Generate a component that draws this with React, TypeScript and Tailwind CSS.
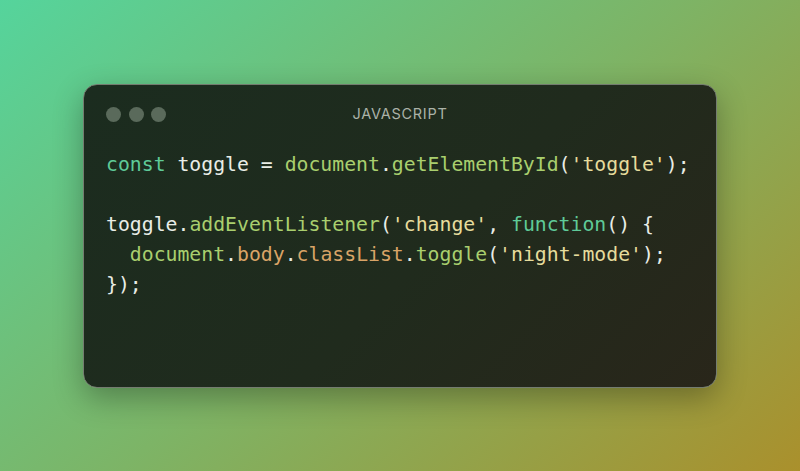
import React from "react";

const mono = { fontFamily: '"DejaVu Sans Mono", "Liberation Mono", monospace' };

const K = ({ children }: { children: React.ReactNode }) => <span className="text-[#5fca98]">{children}</span>;
const F = ({ children }: { children: React.ReactNode }) => <span className="text-[#a9cf6e]">{children}</span>;
const S = ({ children }: { children: React.ReactNode }) => <span className="text-[#e6dc9c]">{children}</span>;
const P = ({ children }: { children: React.ReactNode }) => <span className="text-[#d9a467]">{children}</span>;

export default function App() {
  return (
    <div className="w-[800px] h-[471px] flex items-center justify-center bg-[linear-gradient(140deg,#55d49c_0%,#7db466_50%,#aa902c_100%)]">
      <div className="w-[634px] h-[304px] rounded-[14px] border border-[#747c70] bg-[linear-gradient(135deg,#1b2c1f_0%,#202b1d_55%,#29261a_100%)] shadow-[0_10px_30px_rgba(0,0,0,0.3)] px-[22px] pt-[22px]">
        <div className="relative flex items-center h-[15px]">
          <div className="flex gap-[7.5px]">
            <div className="w-[15px] h-[15px] rounded-full bg-[#5a6a5b]" />
            <div className="w-[15px] h-[15px] rounded-full bg-[#5a6a5b]" />
            <div className="w-[15px] h-[15px] rounded-full bg-[#5a6a5b]" />
          </div>
          <div
            className="absolute left-0 right-0 text-center text-[14.5px] tracking-[0.05em] text-[#abb2a8]"
            style={{ fontFamily: 'Inter, "Liberation Sans", sans-serif' }}
          >
            JAVASCRIPT
          </div>
        </div>
        <pre className="mt-[28px] text-[19.8px] leading-[30px] text-[#e9ede6]" style={mono}>
          <div>
            <K>const</K> toggle = <F>document</F>.<F>getElementById</F>(<S>'toggle'</S>);
          </div>
          <div>&nbsp;</div>
          <div>
            toggle.<F>addEventListener</F>(<S>'change'</S>, <K>function</K>() {"{"}
          </div>
          <div>
            {"  "}<F>document</F>.<P>body</P>.<P>classList</P>.<F>toggle</F>(<S>'night-mode'</S>);
          </div>
          <div>{"});"}</div>
        </pre>
      </div>
    </div>
  );
}
